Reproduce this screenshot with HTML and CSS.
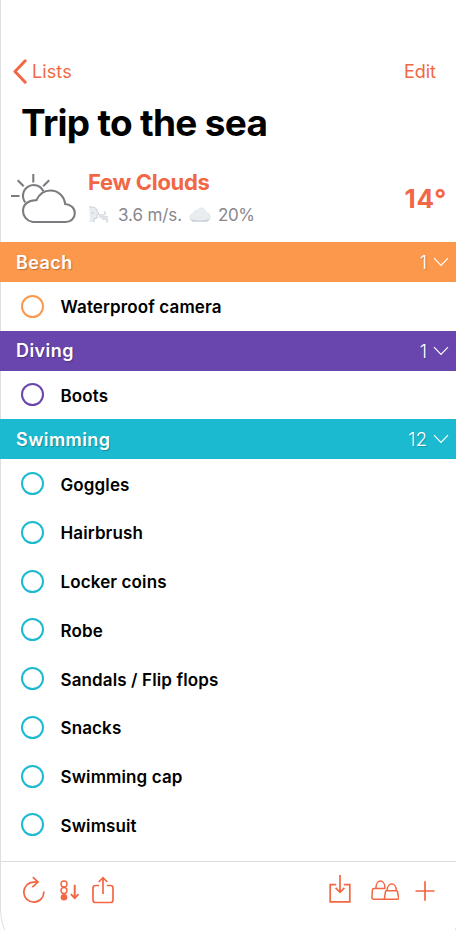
FILE: index.html
```
<!DOCTYPE html>
<html lang="en">
<head>
<meta charset="utf-8">
<title>Trip to the sea</title>
<link rel="stylesheet" href="styles.css">
</head>
<body>
<div class="screen">
  <nav class="nav">
    <a class="back"><svg width="14" height="25" viewBox="0 0 14 25"><path d="M12.200 1.800 2 12.500l10.200 10.700" fill="none" stroke="currentColor" stroke-width="3" stroke-linecap="round" stroke-linejoin="round"/></svg><span>Lists</span></a>
    <a class="edit">Edit</a>
  </nav>
  <h1 class="title">Trip to the sea</h1>
  <section class="weather">
    <svg class="sky" width="66" height="52" viewBox="0 0 66 52" fill="none" stroke="#7c7c80" stroke-width="2.1">
      <path d="M22.300 1v8.500M6.700 7.300l6 6M38.200 7.300l-6 6M0 23h8.500"/>
      <path d="M14.200 29.300A10.700 10.700 0 1 1 32.400 18.300"/>
      <path d="M21 48.800a11 11 0 0 1-9-11c0-6 5-11 13.400-10.600C28 21.600 33 17.500 39.500 17.500c7.500 0 13.700 5.500 14.700 13.500 5.300.5 9.600 4 9.600 9.200 0 5-4 8.800-9 8.800H22z"/>
    </svg>
    <div class="facts">
      <div class="sky-name">Few Clouds</div>
      <div class="details">
        <svg class="wind" width="22" height="18" viewBox="0 0 22 18"><path d="M1 1c5-.5 8 1 8 4l2 3-2 1v3l-3 1v3H1l1-4z" fill="#e8ecf0"/><path d="M1 1c5-.5 8 1 8 4l2 3-2 1v3l-3 1v3" fill="none" stroke="#c8ced5"/><path d="M3 7h3M11 9h4c3 0 3-3 1-3M11 11h9M14 13h4c2 0 2 3 0 3" fill="none" stroke="#d2d8dd" stroke-width="1.500"/></svg>
        <span class="speed">3.6 m/s.</span>
        <svg class="cloud" width="22" height="16" viewBox="0 0 22 16"><path d="M5 14.500C2 14.500.7 12.700.7 10.600c0-2.200 1.600-3.600 3.500-3.800C4.700 4 6.600 3 8.600 3.400 9.600 1.500 11.300.7 13 1c2.400.3 3.700 2.200 3.700 4.400 2.700-.1 4.600 1.900 4.600 4.600 0 2.600-1.800 4.500-4.300 4.500z" fill="#eaedf0" stroke="#d9dde1" stroke-width=".6"/><path d="M2 12c4 2 13 2 18 0-.7 1.700-1.700 2.500-3.300 2.500H5C3.500 14.500 2.600 13.700 2 12z" fill="#c4cbd1"/></svg>
        <span class="cover">20%</span>
      </div>
    </div>
    <div class="temp">14°</div>
  </section>
  <main class="lists">
    <section class="group beach">
      <header class="head"><h2>Beach</h2><span class="count">1</span><svg class="chev" width="16" height="10" viewBox="0 0 16 10"><path d="M1 1.200 8 8.500l7-7.300"/></svg></header>
      <div class="row"><i class="ring"></i><span>Waterproof camera</span></div>
    </section>
    <section class="group diving">
      <header class="head"><h2>Diving</h2><span class="count">1</span><svg class="chev" width="16" height="10" viewBox="0 0 16 10"><path d="M1 1.200 8 8.500l7-7.300"/></svg></header>
      <div class="row"><i class="ring"></i><span>Boots</span></div>
    </section>
    <section class="group swimming">
      <header class="head"><h2>Swimming</h2><span class="count">12</span><svg class="chev" width="16" height="10" viewBox="0 0 16 10"><path d="M1 1.200 8 8.500l7-7.300"/></svg></header>
      <div class="row"><i class="ring"></i><span>Goggles</span></div>
      <div class="row"><i class="ring"></i><span>Hairbrush</span></div>
      <div class="row"><i class="ring"></i><span>Locker coins</span></div>
      <div class="row"><i class="ring"></i><span>Robe</span></div>
      <div class="row"><i class="ring"></i><span>Sandals / Flip flops</span></div>
      <div class="row"><i class="ring"></i><span>Snacks</span></div>
      <div class="row"><i class="ring"></i><span>Swimming cap</span></div>
      <div class="row"><i class="ring"></i><span>Swimsuit</span></div>
    </section>
  </main>
  <footer class="toolbar">
    <svg width="22" height="28" viewBox="0 0 22 28"><path d="M14 6.100h-3A10 10 0 1 0 20.800 15.500M9.800 1.200l5.200 4.900-5.700 5.100"/></svg>
    <svg class="sort" width="20" height="22" viewBox="0 0 20 22"><circle cx="4" cy="4" r="3"/><circle cx="4" cy="10.500" r="3"/><circle cx="4" cy="17.200" r="3.300" fill="currentColor" stroke="none"/><path d="M14.700 4.800v12.700M10.900 14.100l3.800 4 3.800-4" stroke-width="2"/></svg>
    <svg class="share" width="22" height="28" viewBox="0 0 22 28"><path d="M7.200 9.500H3.500Q1 9.500 1 12v12q0 2.500 2.500 2.500h15q2.500 0 2.500-2.500V12q0-2.500-2.500-2.500h-3.700M11 18V1.700M6.700 6 11 1.700 15.300 6"/></svg>
    <svg class="inbox" width="22" height="28" viewBox="0 0 22 28"><path d="M7.200 9.600H1.200v17.200h19.600V9.600h-6M11 0v17M6.600 12.800l4.400 4.500 4.400-4.500"/></svg>
    <svg class="bags" width="28" height="22" viewBox="0 0 28 22"><path d="M13.300 19.300H3Q.9 19.300.9 17.300l.5-7.200q.1-1.600 1.700-1.600H14.500M4.900 8.300C4.900-1.300 14-1.300 14 8.300M15.400 10.700h10.300q.6 0 .8.800l1.100 6.200q.2 1.600-1.200 1.600H13.300l1.200-7.800q.2-.8.900-.8zM16.200 10.500c0-8.600 9.100-8.600 9.100 0"/></svg>
    <svg class="plus" width="20" height="20" viewBox="0 0 20 20"><path d="M10 .3v19.400M.5 10h19"/></svg>
  </footer>
</div>
</body>
</html>
```
FILE: styles.css
```
* { box-sizing: border-box; }
body { margin: 0; background: #fff; font-family: Inter, "Liberation Sans", sans-serif; }
.screen { position: relative; isolation: isolate; width: 456px; height: 930px; overflow: hidden; display: flex; flex-direction: column; padding: 52px 0 0 1px; color: #000; }
.screen::before { content: ""; position: absolute; z-index: -1; left: 0; top: -30px; width: 458px; height: 988px; border: 1px solid #dfdfdf; border-radius: 30px 30px 50px 50px; }
svg { display: block; flex: none; }
h1, h2 { margin: 0; }
.nav { height: 38px; display: flex; align-items: center; justify-content: space-between; padding: 0 20px 0 12px; color: #f26744; font-size: 18px; }
.back { display: flex; align-items: center; gap: 5px; }
.back span { letter-spacing: .1px; }
.title { height: 64px; padding-left: 20px; font-size: 37px; line-height: 66px; font-weight: 700; letter-spacing: -.7px; white-space: nowrap; }
.weather { height: 88px; display: flex; align-items: center; padding: 0 10px 0 10px; }
.sky { margin: 1px 11px 0 0; }
.facts { flex: 1; }
.sky-name { color: #f26744; font-size: 22px; line-height: 28px; font-weight: 700; letter-spacing: -.3px; margin-top: 0; }
.details { display: flex; align-items: center; height: 24px; margin-top: 7px; margin-bottom: 1px; color: #88888c; font-size: 17px; white-space: nowrap; }
.speed { margin: 0 7px 0 8px; letter-spacing: -.1px; }
.cover { margin-left: 7px; letter-spacing: -.4px; }
.temp { color: #f26744; font-size: 26px; font-weight: 700; letter-spacing: .9px; margin-right: -1px; }
.lists { height: 619px; flex: none; }
.beach { --tone: #fc984c; }
.diving { --tone: #6945ae; }
.swimming { --tone: #1cbad1; }
.head { height: 40px; display: flex; align-items: center; background: var(--tone); color: #fff; padding: 0 7px 0 16px; margin-left: -1px; }
.head h2 { flex: 1; font-size: 18px; font-weight: 600; letter-spacing: .45px; text-shadow: 1px 1px 1px rgba(0,0,0,.25); }
.count { font-size: 18.5px; font-weight: 300; text-shadow: 1px 1px 1px rgba(0,0,0,.2); }
.chev { margin-left: 6px; fill: none; stroke: #fff; stroke-width: 1.2; }
.row { height: 48.750px; display: flex; align-items: center; padding-left: 20px; gap: 16.500px; font-size: 17px; font-weight: 600; letter-spacing: .12px; white-space: nowrap; }
.beach .row, .diving .row { height: 48.600px; }
.row span { padding-top: 2px; }
.ring { width: 23px; height: 23px; border: 2px solid var(--tone); border-radius: 50%; }
.toolbar { flex: 1; display: flex; align-items: flex-start; border-top: 1px solid #dcdcde; margin-left: -1px; padding: 14px 21px 0 23px; color: #f26744; }
.toolbar svg { fill: none; stroke: currentColor; stroke-width: 1.7; }
.toolbar .sort { margin: 4px 0 0 15px; stroke-width: 1.4; }
.toolbar .share { margin-left: 12px; }
.toolbar .inbox { margin: -1px 0 0 auto; }
.toolbar .bags { margin: 4px 0 0 20px; stroke-width: 1.5; }
.toolbar .plus { margin: 5px 0 0 16px; }
```
